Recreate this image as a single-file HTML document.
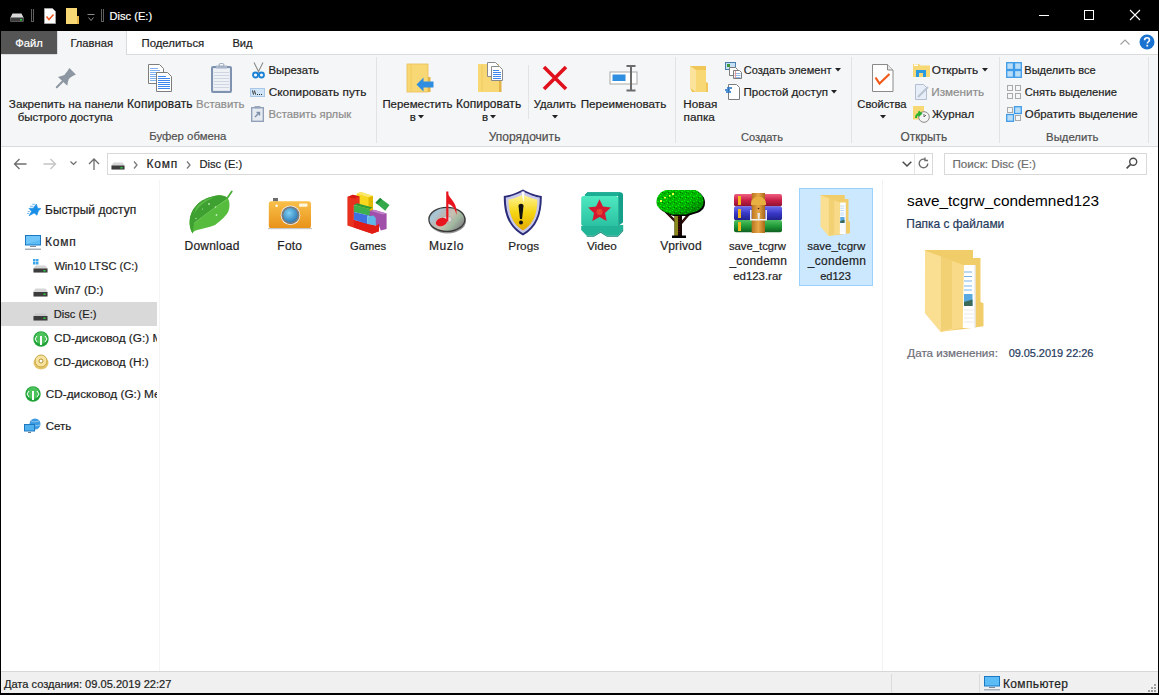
<!DOCTYPE html>
<html><head><meta charset="utf-8">
<style>
html,body{margin:0;padding:0;}
body{width:1159px;height:695px;position:relative;overflow:hidden;background:#fff;font-family:"Liberation Sans",sans-serif;}
.a{position:absolute;}
.t{position:absolute;white-space:pre;font-family:"Liberation Sans",sans-serif;-webkit-text-stroke:0.2px currentColor;}
svg{position:absolute;overflow:visible;}
</style></head><body>
<!-- title bar -->
<div class="a" style="left:0;top:0;width:1159px;height:31px;background:#000"></div>
<!-- borders -->
<div class="a" style="left:0;top:0;width:1px;height:695px;background:#000"></div>
<div class="a" style="left:1158px;top:0;width:1px;height:695px;background:#000"></div>
<div class="a" style="left:0;top:693px;width:1159px;height:2px;background:#000"></div>

<!-- title icons -->
<svg style="left:10px;top:13px" width="14" height="9" viewBox="0 0 14 9">
 <path d="M2.5 0.5h9l2 4v4h-13v-4z" fill="#d9d9d9"/>
 <rect x="0.5" y="4.5" width="13" height="4" fill="#3c3c3c"/>
 <rect x="10" y="6" width="2" height="1.5" fill="#27d13c"/>
</svg>
<svg style="left:44px;top:8px" width="12" height="16" viewBox="0 0 12 16">
 <path d="M0.5 0.5h8l3 3v12h-11z" fill="#fff" stroke="#a0a0a0"/>
 <path d="M2.5 8.5l2.5 3l4.5-5" fill="none" stroke="#f05a22" stroke-width="1.6"/>
</svg>
<svg style="left:66px;top:8px" width="13" height="16" viewBox="0 0 13 16">
 <rect x="0" y="0" width="11" height="16" fill="#f8d775"/>
 <rect x="11" y="8" width="2" height="8" fill="#e8b84a"/>
</svg>
<svg style="left:87px;top:14px" width="8" height="8" viewBox="0 0 8 8">
 <path d="M0.5 0.5h7" stroke="#8a8a8a"/><path d="M1.5 3.5l2.5 3l2.5-3" fill="none" stroke="#8a8a8a"/>
</svg>
<div class="a" style="left:101px;top:9px;height:12px;width:1px;border:1px solid #5e5e5e;border-top:none"></div>
<div class="a" style="left:31px;top:9px;height:12px;width:1px;border:1px solid #5e5e5e;border-top:none"></div>

<!-- window controls -->
<div class="a" style="left:1039px;top:15px;width:10px;height:1px;background:#fff"></div>
<div class="a" style="left:1084px;top:10px;width:8px;height:8px;border:1px solid #fff"></div>
<svg style="left:1130px;top:10px" width="10" height="10" viewBox="0 0 10 10"><path d="M0 0L10 10M10 0L0 10" stroke="#fff" stroke-width="1.1"/></svg>

<!-- tabs row -->
<div class="a" style="left:1px;top:31px;width:56px;height:23px;background:#555555"></div>
<div class="a" style="left:57px;top:31px;width:68px;height:24px;background:#f5f6f7;border-left:1px solid #dadbdc;border-right:1px solid #dadbdc"></div>
<svg style="left:1120px;top:39px" width="10" height="6" viewBox="0 0 10 6"><path d="M0.5 5.5l4.5-4.5l4.5 4.5" fill="none" stroke="#a0a0a0" stroke-width="1.1"/></svg>
<svg style="left:1139px;top:34px" width="16" height="16" viewBox="0 0 16 16">
 <circle cx="8" cy="8" r="7.5" fill="#1a73d0"/>
 <path d="M5.6 6.2c0-1.5 1.1-2.5 2.5-2.5s2.4 0.9 2.4 2.2c0 1.8-2.2 1.9-2.2 3.6" fill="none" stroke="#fff" stroke-width="1.6"/>
 <rect x="7.4" y="10.8" width="1.7" height="1.7" fill="#fff"/>
</svg>

<!-- ribbon body -->
<div class="a" style="left:1px;top:54px;width:1157px;height:92px;background:#f5f6f7"></div>
<div class="a" style="left:1px;top:54px;width:56px;height:1px;background:#dadbdc"></div>
<div class="a" style="left:126px;top:54px;width:1032px;height:1px;background:#dadbdc"></div>
<div class="a" style="left:1px;top:146px;width:1157px;height:1px;background:#dadbdc"></div>
<div class="a" style="left:376px;top:57px;width:1px;height:86px;background:#e2e3e4"></div>
<div class="a" style="left:675px;top:57px;width:1px;height:86px;background:#e2e3e4"></div>
<div class="a" style="left:851px;top:57px;width:1px;height:86px;background:#e2e3e4"></div>
<div class="a" style="left:999px;top:57px;width:1px;height:86px;background:#e2e3e4"></div>
<div class="a" style="left:1148px;top:57px;width:1px;height:86px;background:#e2e3e4"></div>
<div class="a" style="left:528px;top:65px;width:1px;height:54px;background:#e2e3e4"></div>

<!-- address row -->
<div class="a" style="left:107px;top:153px;width:824px;height:20px;border:1px solid #d9d9d9;background:#fff"></div>
<div class="a" style="left:914px;top:154px;width:1px;height:20px;background:#e5e5e5"></div>
<div class="a" style="left:944px;top:153px;width:201px;height:20px;border:1px solid #d9d9d9;background:#fff"></div>

<!-- panes -->
<div class="a" style="left:159px;top:180px;width:1px;height:491px;background:#f4f4f4"></div>
<div class="a" style="left:882px;top:180px;width:1px;height:491px;background:#f2f2f2"></div>
<div class="a" style="left:1px;top:302px;width:156px;height:24px;background:#d9d9d9"></div>

<!-- selected item -->
<div class="a" style="left:799px;top:188px;width:72px;height:96px;background:#cce8ff;border:1px solid #99d1ff"></div>

<!-- status bar -->
<div class="a" style="left:1px;top:671px;width:1157px;height:1px;background:#d7d7d7"></div>
<div class="a" style="left:1px;top:672px;width:1157px;height:21px;background:#f0f0f0"></div>
<div class="a" style="left:891px;top:674px;width:1px;height:19px;background:#dcdcdc"></div>
<div class="a" style="left:979px;top:674px;width:1px;height:19px;background:#dcdcdc"></div>

<!-- ========== RIBBON ICONS ========== -->
<!-- pin -->
<svg style="left:56px;top:68px" width="21" height="21" viewBox="0 0 21 21">
 <path d="M13.4 0 L19.9 6.5 C 16 8, 13.5 10, 12.6 11.5 C 12 13.5, 11.5 15.5, 11.3 17.7 L 2 8.9 C 4.5 8.3, 6.5 7.5, 8.4 6.9 C 10 5, 12 2.5, 13.4 0 Z" fill="#8c97a1"/>
 <path d="M6.5 13.5L0.8 19.2" stroke="#8c97a1" stroke-width="2" stroke-linecap="round"/>
</svg>
<!-- copy -->
<svg style="left:148px;top:64px" width="25" height="28" viewBox="0 0 25 28">
 <path d="M0.5 0.5h11l4 4v15h-15z" fill="#fff" stroke="#7d7d7d"/>
 <g stroke="#7fb0f0" stroke-width="1"><path d="M2 4.5h8M2 6.5h10M2 8.5h10M2 10.5h10M2 12.5h10M2 14.5h10M2 16.5h10"/></g>
 <path d="M8.5 8.5h11l4 4v15h-15z" fill="#fff" stroke="#7d7d7d"/>
 <g stroke="#3d86ee" stroke-width="1"><path d="M10 12.5h8M10 14.5h12M10 16.5h12M10 18.5h12M10 20.5h12M10 22.5h12M10 24.5h12"/></g>
</svg>
<!-- paste clipboard -->
<svg style="left:211px;top:63px" width="21" height="30" viewBox="0 0 21 30">
 <rect x="1" y="4" width="19" height="25" rx="1" fill="#dfe5ee" stroke="#7f93b1" stroke-width="2"/>
 <rect x="2.5" y="6" width="16" height="21" fill="#eef1f6"/>
 <g stroke="#cfd6e2"><path d="M3 9.5h15M3 12.5h15M3 15.5h15M3 18.5h15M3 21.5h15M3 24.5h15"/></g>
 <rect x="5" y="2.5" width="11" height="3" fill="#aab7ca"/>
 <rect x="8" y="0.5" width="5" height="3" rx="1.5" fill="none" stroke="#9aa8bd"/>
</svg>
<!-- scissors -->
<svg style="left:252px;top:62px" width="13" height="17" viewBox="0 0 13 17">
 <path d="M2 0.5l5 10M11 0.5l-5 10" stroke="#8a8a8a" stroke-width="1.1"/>
 <circle cx="3.5" cy="13" r="2.5" fill="none" stroke="#1a82d6" stroke-width="1.8"/>
 <circle cx="9.5" cy="13" r="2.5" fill="none" stroke="#1a82d6" stroke-width="1.8"/>
</svg>
<!-- copy path -->
<svg style="left:250px;top:88px" width="15" height="9" viewBox="0 0 15 9">
 <rect x="0.5" y="0.5" width="14" height="8" fill="#cfe4f7" stroke="#a9c8e8"/>
 <path d="M2.5 2.5l1 4M4.5 2.5l1 4" stroke="#2b2b2b"/>
 <path d="M7 6.5h1M9 6.5h1M11 6.5h1" stroke="#2b2b2b"/>
</svg>
<!-- paste shortcut -->
<svg style="left:251px;top:106px" width="13" height="16" viewBox="0 0 13 16">
 <rect x="0.7" y="1.7" width="11.6" height="13.6" fill="#e6ebf2" stroke="#8b9bb4" stroke-width="1.3"/>
 <rect x="3.5" y="0" width="6" height="2.5" fill="#9aa8bd"/>
 <path d="M4 11l4-4M5.5 6.5h3v3" fill="none" stroke="#7f8fa8" stroke-width="1.4"/>
</svg>
<!-- move to -->
<svg style="left:406px;top:63px" width="28" height="30" viewBox="0 0 28 30">
 <rect x="1" y="1" width="21" height="28" fill="#f8d775"/>
 <rect x="1" y="1" width="21" height="28" fill="none" stroke="#e8bf55" stroke-width="0.8"/>
 <path d="M5 2v26" stroke="#f3ca5f" stroke-width="1"/>
 <rect x="22" y="14" width="2.5" height="15" fill="#e3b447"/>
 <path d="M10.5 21.5l7-7v4h10v6h-10v4z" fill="#2f8ee0"/>
</svg>
<!-- copy to -->
<svg style="left:478px;top:62px" width="27" height="31" viewBox="0 0 27 31">
 <rect x="0" y="2" width="21" height="28" fill="#f8d775"/>
 <path d="M4 3v26" stroke="#f3ca5f"/>
 <rect x="21" y="15" width="2.5" height="15" fill="#e3b447"/>
 <path d="M9.5 0.5h8l3 3v11h-11z" fill="#fff" stroke="#8a8a8a"/>
 <path d="M13.5 4.5h8l3 3v11h-11z" fill="#fff" stroke="#8a8a8a"/>
 <g stroke="#3d86ee"><path d="M15 8.5h6M15 10.5h8M15 12.5h8M15 14.5h8M15 16.5h8"/></g>
</svg>
<!-- delete X -->
<svg style="left:542px;top:65px" width="26" height="26" viewBox="0 0 26 26">
 <path d="M2 2L24 24M24 2L2 24" stroke="#e0101c" stroke-width="3.6"/>
</svg>
<!-- rename -->
<svg style="left:609px;top:65px" width="30" height="27" viewBox="0 0 30 27">
 <rect x="1" y="7" width="27" height="12" fill="#fff" stroke="#a8a8a8"/>
 <rect x="3.5" y="9.5" width="13" height="6.5" fill="#2f8ee0"/>
 <path d="M17.5 1h9M22 1.5v24M17.5 25.5h9" stroke="#6b6b6b" stroke-width="2"/>
</svg>
<!-- new folder -->
<svg style="left:689px;top:65px" width="20" height="28" viewBox="0 0 20 28">
 <path d="M1 1h16v16l2 1v9h-16l-2-4z" fill="#f0c659"/>
 <path d="M1 1l6 4v22l-6-4z" fill="#fbe39b"/>
 <path d="M7 5h10v22h-10z" fill="#f8d775"/>
</svg>
<!-- new item -->
<svg style="left:725px;top:62px" width="17" height="17" viewBox="0 0 17 17">
 <rect x="0.5" y="0.5" width="10" height="7" fill="#c6e0f5" stroke="#4a7fae"/>
 <rect x="2" y="2" width="3" height="3" fill="#3c9a3c"/>
 <path d="M4.5 5.5h6l2 2v6h-8z" fill="#fff" stroke="#7d7d7d"/>
 <path d="M8.5 8.5h6l2 2v6h-8z" fill="#fff" stroke="#7d7d7d"/>
 <g stroke="#8fb7e8"><path d="M9.5 11.5h6M9.5 13.5h6M9.5 15.5h6"/></g>
 <path d="M10.5 9v7" stroke="#e89a9a"/>
</svg>
<!-- easy access -->
<svg style="left:725px;top:84px" width="15" height="16" viewBox="0 0 15 16">
 <path d="M3.5 0.5h8l3 3v12h-11z" fill="#fff" stroke="#7d7d7d"/>
 <path d="M0 6h5M2 4h5M1 8h5" stroke="#1b6fc7" stroke-width="1.3"/>
</svg>
<!-- properties -->
<svg style="left:872px;top:64px" width="22" height="28" viewBox="0 0 22 28">
 <path d="M0.5 0.5h15l5.5 5.5v21.5h-20.5z" fill="#fff" stroke="#8a8a8a"/>
 <path d="M15.5 0.5v5.5h5.5" fill="#e8e8e8" stroke="#8a8a8a"/>
 <path d="M3.5 13.5l4 6l10-9.5" fill="none" stroke="#f05a1a" stroke-width="2.2"/>
</svg>
<!-- open -->
<svg style="left:913px;top:63px" width="17" height="14" viewBox="0 0 17 14">
 <path d="M0 1h6l1.5 1.5h9.5v11.5h-17z" fill="#f8d775"/>
 <rect x="1" y="1.5" width="4" height="1.5" fill="#fff"/>
 <path d="M4.5 14v-5.5h7v5.5" fill="none" stroke="#2b9be0" stroke-width="3"/>
</svg>
<!-- edit -->
<svg style="left:915px;top:84px" width="15" height="16" viewBox="0 0 15 16">
 <path d="M0.5 0.5h8l3 3v12h-11z" fill="#e8eef7" stroke="#b3bfd0"/>
 <path d="M3 13l10-10" stroke="#b8c3d2" stroke-width="2"/>
</svg>
<!-- history -->
<svg style="left:913px;top:106px" width="17" height="17" viewBox="0 0 17 17">
 <rect x="0" y="0" width="11" height="13.5" fill="#f8d775"/>
 <circle cx="11" cy="11" r="5.3" fill="#f4f4f4" stroke="#8a8a8a"/>
 <path d="M11 8v3l2 -2" fill="none" stroke="#666"/>
 <path d="M3 12c0-3 2-4.5 5-4.5M5.5 5.5l2.5 2l-2.5 2.5" fill="none" stroke="#29b22f" stroke-width="2"/>
</svg>
<!-- select all -->
<svg style="left:1006px;top:62px" width="16" height="16" viewBox="0 0 16 16">
 <g fill="#b9dcf7" stroke="#3d9be9" stroke-width="1.3">
 <rect x="0.7" y="0.7" width="6.8" height="6.8"/><rect x="8.5" y="0.7" width="6.8" height="6.8"/>
 <rect x="0.7" y="8.5" width="6.8" height="6.8"/><rect x="8.5" y="8.5" width="6.8" height="6.8"/></g>
</svg>
<!-- select none -->
<svg style="left:1007px;top:85px" width="15" height="15" viewBox="0 0 15 15">
 <g fill="none" stroke="#a9a9a9"><rect x="0.5" y="0.5" width="5" height="5"/><rect x="8.5" y="0.5" width="5" height="5"/>
 <rect x="0.5" y="8.5" width="5" height="5"/><rect x="8.5" y="8.5" width="5" height="5"/></g>
</svg>
<!-- invert -->
<svg style="left:1006px;top:106px" width="16" height="16" viewBox="0 0 16 16">
 <g fill="none" stroke="#a9a9a9"><rect x="1.5" y="1.5" width="5" height="5"/><rect x="9.5" y="9.5" width="5" height="5"/></g>
 <g fill="#b9dcf7" stroke="#3d9be9" stroke-width="1.3"><rect x="8.5" y="0.7" width="6.8" height="6.8"/><rect x="0.7" y="8.5" width="6.8" height="6.8"/></g>
</svg>
<!-- dropdown arrows -->
<svg style="left:418px;top:115px" width="6" height="4" viewBox="0 0 6 4"><path d="M0 0h6l-3 3.5z" fill="#222"/></svg>
<svg style="left:490px;top:115px" width="6" height="4" viewBox="0 0 6 4"><path d="M0 0h6l-3 3.5z" fill="#222"/></svg>
<svg style="left:552px;top:115px" width="6" height="4" viewBox="0 0 6 4"><path d="M0 0h6l-3 3.5z" fill="#222"/></svg>
<svg style="left:880px;top:115px" width="6" height="4" viewBox="0 0 6 4"><path d="M0 0h6l-3 3.5z" fill="#222"/></svg>
<svg style="left:835px;top:68px" width="6" height="4" viewBox="0 0 6 4"><path d="M0 0h6l-3 3.5z" fill="#222"/></svg>
<svg style="left:831px;top:90px" width="6" height="4" viewBox="0 0 6 4"><path d="M0 0h6l-3 3.5z" fill="#222"/></svg>
<svg style="left:982px;top:68px" width="6" height="4" viewBox="0 0 6 4"><path d="M0 0h6l-3 3.5z" fill="#222"/></svg>

<!-- ========== ADDRESS ROW ICONS ========== -->
<svg style="left:13px;top:158px" width="14" height="12" viewBox="0 0 14 12"><path d="M13.5 6h-12M6.5 1l-5 5l5 5" fill="none" stroke="#6d6d6d" stroke-width="1.3"/></svg>
<svg style="left:43px;top:158px" width="14" height="12" viewBox="0 0 14 12"><path d="M0.5 6h12M7.5 1l5 5l-5 5" fill="none" stroke="#c4c4c4" stroke-width="1.3"/></svg>
<svg style="left:70px;top:161px" width="7" height="5" viewBox="0 0 7 5"><path d="M0.5 0.5l3 3l3-3" fill="none" stroke="#6d6d6d" stroke-width="1.2"/></svg>
<svg style="left:88px;top:158px" width="12" height="12" viewBox="0 0 12 12"><path d="M6 12v-11M1 6l5-5l5 5" fill="none" stroke="#6d6d6d" stroke-width="1.3"/></svg>
<svg style="left:111px;top:162px" width="14" height="8" viewBox="0 0 14 8">
 <path d="M2.5 0.5h9l2 3v4h-13v-4z" fill="#d6d6d6"/>
 <rect x="0.5" y="3.5" width="13" height="4" fill="#3c3c3c"/>
 <rect x="9.5" y="5" width="2" height="1.5" fill="#27d13c"/>
</svg>
<svg style="left:133px;top:161px" width="5" height="8" viewBox="0 0 5 8"><path d="M1 0.5l3 3.5l-3 3.5" fill="none" stroke="#7a7a7a" stroke-width="1.3"/></svg>
<svg style="left:186px;top:161px" width="5" height="8" viewBox="0 0 5 8"><path d="M1 0.5l3 3.5l-3 3.5" fill="none" stroke="#7a7a7a" stroke-width="1.3"/></svg>
<svg style="left:902px;top:161px" width="10" height="6" viewBox="0 0 10 6"><path d="M0.7 0.7l4.3 4.3l4.3-4.3" fill="none" stroke="#4a4a4a" stroke-width="1.5"/></svg>
<svg style="left:918px;top:157px" width="12" height="13" viewBox="0 0 12 13"><path d="M9.8 6.5a4.3 4.3 0 1 1 -2.2-3.8M7 0.5v3h3" fill="none" stroke="#6d6d6d" stroke-width="1.4"/></svg>
<svg style="left:1126px;top:157px" width="12" height="12" viewBox="0 0 12 12"><circle cx="7.2" cy="4.8" r="3.5" fill="none" stroke="#4a4a4a" stroke-width="1.4"/><path d="M4.6 7.4l-4 4" stroke="#4a4a4a" stroke-width="1.6"/></svg>

<!-- ========== NAV ICONS ========== -->
<svg style="left:25px;top:203px" width="17" height="14" viewBox="0 0 17 14">
 <path d="M11.4 1.0 L12.6 5.2 L16.0 5.5 L13.3 8.0 L12.0 12.3 L9.2 10.0 L4.0 12.8 L6.6 8.3 L3.9 5.4 L8.3 5.2 Z" fill="#1a8ee6" stroke="#1a8ee6" stroke-width="0.6" stroke-linejoin="round"/>
 <path d="M7.2 1.3h3M5 3.3h3.5M2.8 8.5h2M2 10.4h2.2" stroke="#6ab4ee" stroke-width="0.9"/>
</svg>
<svg style="left:25px;top:235px" width="16" height="15" viewBox="0 0 16 15">
 <rect x="0.5" y="0.5" width="15" height="9.5" fill="#5bbcf6" stroke="#1b79c4"/>
 <path d="M1 1h14v4l-14 4z" fill="#7fcdfa" opacity="0.6"/>
 <rect x="5" y="11" width="6" height="1" fill="#7d8c9c"/>
 <rect x="0" y="13.5" width="16" height="1.5" fill="#a7b1bb"/>
</svg>
<svg style="left:33px;top:259px" width="15" height="14" viewBox="0 0 15 14">
 <g fill="#3aa6e8"><rect x="0" y="0" width="2.5" height="2.5"/><rect x="3" y="0" width="2.5" height="2.5"/><rect x="0" y="3" width="2.5" height="2.5"/><rect x="3" y="3" width="2.5" height="2.5"/></g>
 <path d="M2.5 6.5h10l2 3v4h-14v-4z" fill="#d6d6d6"/>
 <rect x="0.5" y="9.5" width="14" height="4" fill="#3c3c3c"/>
 <rect x="10.5" y="11" width="2" height="1.5" fill="#27d13c"/>
</svg>
<svg style="left:33px;top:288px" width="15" height="9" viewBox="0 0 15 9">
 <path d="M2.5 0.5h10l2 3v5h-14v-5z" fill="#d6d6d6"/>
 <rect x="0.5" y="4" width="14" height="4.5" fill="#3c3c3c"/>
 <rect x="10.5" y="5.5" width="2" height="1.5" fill="#27d13c"/>
</svg>
<svg style="left:33px;top:312px" width="15" height="9" viewBox="0 0 15 9">
 <path d="M2.5 1.5h10l2 3v4h-14v-4z" fill="#c9c9c9"/>
 <rect x="0.5" y="4" width="14" height="4.5" fill="#3c3c3c"/>
 <rect x="10.5" y="5.5" width="2" height="1.5" fill="#27d13c"/>
</svg>
<svg style="left:33px;top:331px" width="16" height="16" viewBox="0 0 16 16">
 <circle cx="8" cy="8" r="7.7" fill="#22a33a"/><circle cx="8" cy="7" r="6" fill="#4cc25a"/>
 <rect x="7" y="5" width="2" height="9" fill="#fff"/>
 <path d="M4 5l-2 3l2 3M12 5l2 3l-2 3" fill="none" stroke="#fff" stroke-width="1"/>
</svg>
<svg style="left:33px;top:354px" width="16" height="16" viewBox="0 0 16 16">
 <ellipse cx="8" cy="9" rx="7.5" ry="6.5" fill="#e3c56a"/>
 <circle cx="8" cy="7" r="6" fill="#f6e3a0" stroke="#c8a540"/>
 <circle cx="8" cy="7" r="2" fill="#fff" stroke="#b59030"/>
</svg>
<svg style="left:25px;top:386px" width="16" height="16" viewBox="0 0 16 16">
 <circle cx="8" cy="8" r="7.7" fill="#22a33a"/><circle cx="8" cy="7" r="6" fill="#4cc25a"/>
 <rect x="7" y="5" width="2" height="9" fill="#fff"/>
 <path d="M4 5l-2 3l2 3M12 5l2 3l-2 3" fill="none" stroke="#fff" stroke-width="1"/>
</svg>
<svg style="left:24px;top:418px" width="17" height="16" viewBox="0 0 17 16">
 <circle cx="11" cy="6" r="5.5" fill="#3e9be0"/>
 <path d="M7 3c2 1 5 1 8 0M6.5 7c3 1 6 1 9.5 0" stroke="#9fd0f5" stroke-width="0.8" fill="none"/>
 <rect x="0.5" y="6.5" width="10" height="6.5" fill="#4fb2ef" stroke="#1d78c0"/>
 <rect x="4" y="14" width="3" height="1" fill="#6d7f90"/>
</svg>

<!-- ========== STATUS ========== -->
<svg style="left:984px;top:676px" width="16" height="15" viewBox="0 0 16 15">
 <rect x="0.5" y="0.5" width="15" height="9.5" fill="#5bbcf6" stroke="#1b79c4"/>
 <rect x="5" y="11" width="6" height="1" fill="#7d8c9c"/>
 <rect x="0" y="13" width="16" height="1.5" fill="#a7b1bb"/>
</svg>
<svg style="left:1148px;top:684px" width="8" height="8" viewBox="0 0 8 8">
 <g fill="#a0a0a0"><rect x="6" y="0" width="2" height="2"/><rect x="3" y="3" width="2" height="2"/><rect x="6" y="3" width="2" height="2"/><rect x="0" y="6" width="2" height="2"/><rect x="3" y="6" width="2" height="2"/><rect x="6" y="6" width="2" height="2"/></g>
</svg>

<!-- ========== CONTENT ICONS (page coords) ========== -->
<svg style="left:0;top:0" width="1159" height="695" viewBox="0 0 1159 695">
 <defs>
  <linearGradient id="leafg" x1="0" y1="0" x2="0.6" y2="1"><stop offset="0" stop-color="#9be06a"/><stop offset="0.5" stop-color="#5cbf3a"/><stop offset="1" stop-color="#2e8f1e"/></linearGradient>
  <linearGradient id="camg" x1="0" y1="0" x2="0" y2="1"><stop offset="0" stop-color="#f9c04a"/><stop offset="1" stop-color="#e8921a"/></linearGradient>
  <radialGradient id="lensg" cx="0.4" cy="0.35" r="0.7"><stop offset="0" stop-color="#7fd0f5"/><stop offset="1" stop-color="#2a78b5"/></radialGradient>
  <linearGradient id="cdg" x1="0" y1="0" x2="1" y2="0.6"><stop offset="0" stop-color="#9a9aa0"/><stop offset="0.25" stop-color="#a8c8d8"/><stop offset="0.4" stop-color="#b8b8b8"/><stop offset="0.6" stop-color="#c8c0b0"/><stop offset="0.8" stop-color="#a0b8a0"/><stop offset="1" stop-color="#888"/></linearGradient>
  <linearGradient id="shg" x1="0" y1="0" x2="0" y2="1"><stop offset="0" stop-color="#fff59a"/><stop offset="0.5" stop-color="#f6d514"/><stop offset="1" stop-color="#e2a900"/></linearGradient>
  <linearGradient id="vidg" x1="0" y1="0" x2="0" y2="1"><stop offset="0" stop-color="#4ee8c0"/><stop offset="1" stop-color="#2ac2a2"/></linearGradient>
  <linearGradient id="rarR" x1="0" y1="0" x2="0" y2="1"><stop offset="0" stop-color="#f06080"/><stop offset="0.5" stop-color="#c82048"/><stop offset="1" stop-color="#8a1030"/></linearGradient>
  <linearGradient id="rarB" x1="0" y1="0" x2="0" y2="1"><stop offset="0" stop-color="#7070f0"/><stop offset="0.5" stop-color="#3838c8"/><stop offset="1" stop-color="#20208a"/></linearGradient>
  <linearGradient id="rarG" x1="0" y1="0" x2="0" y2="1"><stop offset="0" stop-color="#50c060"/><stop offset="0.5" stop-color="#1f9a38"/><stop offset="1" stop-color="#0e5e20"/></linearGradient>
  <linearGradient id="beltg" x1="0" y1="0" x2="1" y2="0"><stop offset="0" stop-color="#b87420"/><stop offset="0.5" stop-color="#e8a848"/><stop offset="1" stop-color="#a86818"/></linearGradient>
  <pattern id="treep" width="6" height="5" patternUnits="userSpaceOnUse">
   <rect width="6" height="5" fill="#00b400"/><rect x="0" y="0" width="1" height="1" fill="#00ff00"/><rect x="3" y="1" width="2" height="1" fill="#00f000"/><rect x="1" y="3" width="1" height="1" fill="#00ff00"/><rect x="4" y="3" width="1" height="1" fill="#008800"/><rect x="2" y="2" width="1" height="1" fill="#007000"/>
  </pattern>
  <linearGradient id="treeshade" x1="0" y1="0" x2="1" y2="1"><stop offset="0" stop-color="#000" stop-opacity="0"/><stop offset="0.55" stop-color="#000" stop-opacity="0"/><stop offset="1" stop-color="#002000" stop-opacity="0.45"/></linearGradient>
  <symbol id="fold" viewBox="0 0 61 82">
   <path d="M1 0h48v8h7.5v44l3 1.3v23l-21 3l-21.6 2.2z" fill="#f1cd6a"/>
   <path d="M38.5 15h13v63h-13z" fill="#ffffff"/>
   <path d="M50.5 15h1v63h-1z" fill="#e0e0e0"/>
   <g stroke="#6aaae6" stroke-width="0.9"><path d="M40 22h8M40 26.5h8M40 31h8M40 36h8M40 40h8"/></g>
   <g stroke="#dcdcdc" stroke-width="0.6"><path d="M40 60h10M40 64h10M40 68h10M40 72h10"/></g>
   <path d="M40 44h8.5v12h-8.5z" fill="#5aa8e0"/><path d="M40 52l8.5-2.5v6.5h-8.5z" fill="#3a6a5a"/>
   <path d="M1 0.8l39 14.4l-1.5 62.6l-21.6 4.3l-16-19z" fill="#f8da88"/>
   <path d="M17 6.5l11 4v68l-11 2.5z" fill="#f2d074"/>
   <path d="M1 0.8l16 5.7v75.5l-16-19z" fill="#fade92"/>
  </symbol>
 </defs>

 <!-- leaf -->
 <path d="M192.5 233.4 C 188 226, 188.5 214, 195.7 206.2 C 200 201, 207 197, 218.2 195.3 C 222 195, 225 196, 227.5 198 C 230 201, 230 207, 228.3 211.6 C 226 216, 222 220, 215.1 224.9 C 210 227, 203 228, 196.4 230.3 C 194.5 231, 193 232, 192.5 233.4 Z" fill="#56bc3e"/>
 <path d="M192.5 233.4 C 188 226, 188.5 214, 195.7 206.2 C 200 201, 207 197, 218.2 195.3 C 222 195, 225 196, 227.5 198 C 220 204, 210 212, 194.1 223.3 Z" fill="#3ea030"/>
 <path d="M196 208 C 200 202, 207 198, 215 197 C 205 201, 199 206, 194 214 Z" fill="#6cc858" opacity="0.6"/>
 <path d="M194.1 223.3 C 205 215, 215 207, 227 199.5" stroke="#7ad060" stroke-width="0.8" fill="none"/>
 <path d="M227 198.5 L231.8 191.4" stroke="#4cb03a" stroke-width="1.8" stroke-linecap="round"/>
 <g fill="#e8ffe0" opacity="0.75"><circle cx="209" cy="204" r="0.9"/><circle cx="215.5" cy="207" r="0.8"/><circle cx="196" cy="218.5" r="0.7"/><circle cx="216.5" cy="215" r="0.9"/><circle cx="202.5" cy="209" r="0.6"/></g>

 <!-- camera -->
 <rect x="273" y="198" width="5" height="3.5" fill="#6d6d6d"/>
 <rect x="268.8" y="201.3" width="42.2" height="27" rx="2.5" fill="url(#camg)"/>
 <rect x="268" y="228" width="44" height="1.2" fill="#c8c8c8"/>
 <circle cx="290.5" cy="215.2" r="9.8" fill="#f3f3f3"/>
 <circle cx="290.5" cy="215.2" r="9" fill="#7c7c7c"/>
 <circle cx="290.5" cy="215.2" r="7.2" fill="url(#lensg)"/>
 <rect x="299" y="203.5" width="8.5" height="3.2" rx="1" fill="#fff6e0"/>
 <circle cx="276.6" cy="205.8" r="1.2" fill="#fff"/>

 <!-- games blocks -->
 <path d="M356.7 193.4 L361 192 L373 195.9 L373 213 L356.7 208 Z" fill="#f7d81e"/>
 <path d="M356.7 193.4 L361 192 L373 195.9 L368.5 197.3 Z" fill="#fbe870"/>
 <path d="M368.5 197.3 L373 195.9 L373 213 L368.5 213 Z" fill="#e0b800"/>
 <path d="M369 211 L374 209.8 L386.6 213.5 L386.6 229 L380.8 230.6 L379 226 L369 224 Z" fill="#a050a8"/>
 <path d="M370.8 211 L374 209.8 L386.6 213.5 L383 214.5 Z" fill="#c080c8"/>
 <path d="M347.4 197 L352.8 194.8 L359.6 196.6 L359.6 205 L353.9 205 L353.9 220 L375.8 225.8 L379 224 L379 231.2 L372.2 233.7 L347.4 225.4 Z" fill="#e8301e"/>
 <path d="M347.4 197 L352.8 194.8 L359.6 196.6 L354.5 198.6 Z" fill="#d81a14"/>
 <path d="M353.9 220 L375.8 225.8 L379 224 L379 231.2 L372.2 233.7 L353.9 227.5 Z" fill="#e01c14"/>
 <path d="M353.9 204.9 L357 203.3 L372.5 207.5 L369.7 208.9 Z" fill="#2a9a3a"/>
 <path d="M353.9 204.9 L369.7 208.9 L369.7 215.7 L353.9 212.1 Z" fill="#3cb04c"/>
 <path d="M353.9 212.1 L369.7 215.7 L367.2 216.4 L367.2 224 L353.9 219.7 Z" fill="#4070e0"/>
 <path d="M367.2 216.4 L373.7 215.5 L375.8 218.2 L375.8 225.4 L367.2 224 Z" fill="#60b8e8"/>
 <path d="M375.5 202.7 L380.1 198 L389.5 204.9 L385.2 210.7 Z" fill="#34a84a"/>
 <path d="M375.5 202.7 L380.1 198 L382 199.4 L377.2 204 Z" fill="#1e8a34"/>

 <!-- muzlo -->
 <ellipse cx="447.5" cy="221" rx="18.5" ry="12.5" fill="#3c3c3c" opacity="0.55"/>
 <ellipse cx="446.9" cy="219.4" rx="18" ry="12" fill="url(#cdg)" stroke="#3a3a3a" stroke-width="1.3"/>
 <ellipse cx="446.9" cy="219.4" rx="5" ry="3.4" fill="#d8d8d8" stroke="#9a9a9a" stroke-width="0.6"/>
 <ellipse cx="446.9" cy="219.4" rx="2" ry="1.4" fill="#fff"/>
 <ellipse cx="441.5" cy="222" rx="5.8" ry="4" transform="rotate(-20 441.5 222)" fill="#e8141e"/>
 <rect x="446.2" y="191.5" width="2.2" height="30" fill="#e8141e"/>
 <path d="M447 191.5 C 449 199, 458 202, 456.5 215 C 455 208, 452 205, 447.5 203.5 Z" fill="#e8141e"/>

 <!-- shield -->
 <path d="M523 189.5 C 515 193.5, 509 195.5, 503.8 196 C 503.5 214, 509 228, 523 235.5 C 537 228, 542 214, 541.8 196 C 536.5 195.5, 531 193.5, 523 189.5 Z" fill="#2a2c78"/>
 <path d="M523 191.5 C 515.5 195, 510 197, 505.8 197.6 C 505.8 214, 511 226.5, 523 233.3 C 535 226.5, 540 214, 539.8 197.6 C 535.5 197, 530.5 195, 523 191.5 Z" fill="#c8c8ec"/>
 <path d="M523 194.5 C 516.5 197.5, 512 199, 508.5 199.5 C 508.5 214, 513 224.5, 523 230.5 C 533 224.5, 537.5 214, 537.3 199.5 C 534 199, 529.5 197.5, 523 194.5 Z" fill="url(#shg)"/>
 <path d="M521.5 191.5 L524.5 191.5 L523.5 203 Z" fill="#ffffff"/>
 <path d="M518.5 206 C 518.5 203, 523.5 203, 523.5 206 L 522 219 L 520 219 Z" fill="#111"/>
 <circle cx="521" cy="222.5" r="2" fill="#111"/>

 <!-- video -->
 <path d="M581.2 226 L623.2 225 L623.2 229 L618 235.7 L607 235.7 L600.6 231.5 L594 235.7 L586.7 235.7 L581.2 230 Z" fill="#22b496"/>
 <path d="M586.7 235.7 L594 235.7 L600.6 231.5 L607 235.7 L618 235.7 L623.2 229 L623.2 231 L618 236.8 L607 236.8 L600.6 232.8 L594 236.8 L586.7 236.8 Z" fill="#138a78"/>
 <path d="M584.5 195 L587.5 192.2 L620 192.2 C 622 192.2, 623 193.5, 623 195 L623 222.5 L618.1 226 L618.1 196.1 Z" fill="#14a08a"/>
 <path d="M587.5 192.2 L620 192.2 L618.1 196.1 L584.5 196.1 Z" fill="#1cae94"/>
 <rect x="581.2" y="196.1" width="37" height="29.8" rx="2.5" fill="url(#vidg)"/>
 <path d="M599.5 199.3 L602.9 206.6 L610.9 207.6 L605.0 213.1 L606.6 221.0 L599.5 217.1 L592.4 221.0 L594.0 213.1 L588.1 207.6 L596.1 206.6 Z" fill="#d41830"/>
 <circle cx="599.5" cy="212" r="3" fill="#f06030" opacity="0.6"/>

 <!-- tree -->
 <path d="M666 212 L675.5 221.5 M689 214 L680.5 224" stroke="#1a0505" stroke-width="2.4"/>
 <path d="M666 212 L675.5 221.5 M689 214 L680.5 224" stroke="#8a1a10" stroke-width="0.9" stroke-dasharray="1 1"/>
 <rect x="674.5" y="214" width="7.5" height="22" fill="#1a0505"/>
 <rect x="674.5" y="214" width="3.5" height="22" fill="#8a8a1c"/>
 <path d="M679 216v18" stroke="#8a1a10" stroke-width="0.9" stroke-dasharray="1 1.5"/>
 <rect x="672" y="235.5" width="14" height="2.5" fill="#000"/>
 <path d="M667.5 191.5 L697 191.5 C 701.5 193.5, 705 197.5, 705 202.5 C 705 207.5, 702.5 210.5, 698.5 212.5 L 687.5 216 L 673.5 216 C 667.5 214.5, 662.5 211.5, 659.5 208.5 Z" fill="#000"/>
 <path d="M666 190 L695.5 190 C 700 192, 703.5 196, 703.5 201 C 703.5 206, 701 209, 697 211 L 686 214.5 L 672 214.5 C 666 213, 661 210, 658 207 C 656 204.5, 656 199, 658 196 C 660 193, 662 191, 666 190 Z" fill="url(#treep)"/>
 <path d="M666 190 L695.5 190 C 700 192, 703.5 196, 703.5 201 C 703.5 206, 701 209, 697 211 L 686 214.5 L 672 214.5 C 666 213, 661 210, 658 207 C 656 204.5, 656 199, 658 196 C 660 193, 662 191, 666 190 Z" fill="url(#treeshade)"/>
 <g fill="#f0ff40"><rect x="660" y="200" width="2" height="2"/><rect x="664" y="197" width="2" height="1.5"/><rect x="672" y="193" width="2" height="2"/><rect x="669" y="195" width="1.5" height="1.5"/></g>

 <!-- winrar -->
 <rect x="734" y="194" width="48" height="12.6" rx="2" fill="url(#rarR)"/>
 <rect x="734" y="206.3" width="48" height="14" rx="2" fill="url(#rarB)"/>
 <rect x="734" y="220" width="48" height="12.3" rx="2" fill="url(#rarG)"/>
 <g fill="#f5b818"><rect x="738" y="196" width="3" height="9"/><rect x="738" y="209" width="3" height="9"/><rect x="738" y="222" width="3" height="9"/></g>
 <rect x="751.7" y="193" width="13.3" height="40" fill="url(#beltg)"/>
 <path d="M751 203.5 C 751 194.5, 766 194.5, 766 203.5 L 766 205 L 751 205 Z" fill="#e8b040"/>
 <path d="M750.8 210 L750.8 219.8 L766.2 219.8 L766.2 210" fill="none" stroke="#f4f4f4" stroke-width="1.5"/>
 <path d="M757.5 213 L760 213 L759.5 220 L758 220 Z" fill="#e8e8e8"/>
 <circle cx="758.5" cy="208.5" r="0.8" fill="#402000"/>

 <!-- folders -->
 <use href="#fold" x="820" y="195" width="31" height="41"/>
 <use href="#fold" x="924" y="250" width="61" height="82"/>
</svg>


<div class="t" style="left:109.61px;top:11.00px;font-size:11.08px;line-height:11.08px;letter-spacing:0.000px;color:#ffffff;">Disc (E:)</div>
<div class="t" style="left:15.14px;top:38.00px;font-size:11.22px;line-height:11.22px;letter-spacing:0.000px;color:#ffffff;">Файл</div>
<div class="t" style="left:70.40px;top:38.00px;font-size:11.19px;line-height:11.19px;letter-spacing:0.000px;color:#1e1e1e;">Главная</div>
<div class="t" style="left:141.49px;top:38.00px;font-size:11.36px;line-height:11.36px;letter-spacing:0.000px;color:#1e1e1e;">Поделиться</div>
<div class="t" style="left:232.41px;top:38.00px;font-size:11.13px;line-height:11.13px;letter-spacing:0.000px;color:#1e1e1e;">Вид</div>
<div class="t" style="left:8.85px;top:98.00px;font-size:11.74px;line-height:11.74px;letter-spacing:0.000px;color:#1e1e1e;">Закрепить на панели</div>
<div class="t" style="left:17.72px;top:112.00px;font-size:11.53px;line-height:11.53px;letter-spacing:0.000px;color:#1e1e1e;">быстрого доступа</div>
<div class="t" style="left:127.04px;top:98.00px;font-size:12.00px;line-height:12.00px;letter-spacing:0.093px;color:#1e1e1e;">Копировать</div>
<div class="t" style="left:196.09px;top:99.00px;font-size:11.41px;line-height:11.41px;letter-spacing:0.000px;color:#8d8d8d;">Вставить</div>
<div class="t" style="left:268.49px;top:65.00px;font-size:11.37px;line-height:11.37px;letter-spacing:0.000px;color:#1e1e1e;">Вырезать</div>
<div class="t" style="left:268.81px;top:87.00px;font-size:11.81px;line-height:11.81px;letter-spacing:0.000px;color:#1e1e1e;">Скопировать путь</div>
<div class="t" style="left:268.50px;top:109.00px;font-size:11.31px;line-height:11.31px;letter-spacing:0.000px;color:#8d8d8d;">Вставить ярлык</div>
<div class="t" style="left:149.19px;top:131.00px;font-size:11.37px;line-height:11.37px;letter-spacing:0.000px;color:#505050;">Буфер обмена</div>
<div class="t" style="left:382.38px;top:99.00px;font-size:11.44px;line-height:11.44px;letter-spacing:0.000px;color:#1e1e1e;">Переместить</div>
<div class="t" style="left:409.81px;top:112.00px;font-size:11.50px;line-height:11.50px;letter-spacing:0.000px;color:#1e1e1e;">в</div>
<div class="t" style="left:456.04px;top:98.00px;font-size:12.00px;line-height:12.00px;letter-spacing:0.060px;color:#1e1e1e;">Копировать</div>
<div class="t" style="left:482.01px;top:112.00px;font-size:11.50px;line-height:11.50px;letter-spacing:0.000px;color:#1e1e1e;">в</div>
<div class="t" style="left:533.78px;top:99.00px;font-size:11.10px;line-height:11.10px;letter-spacing:0.000px;color:#1e1e1e;">Удалить</div>
<div class="t" style="left:580.67px;top:98.00px;font-size:11.68px;line-height:11.68px;letter-spacing:0.000px;color:#1e1e1e;">Переименовать</div>
<div class="t" style="left:488.66px;top:131.00px;font-size:12.00px;line-height:12.00px;letter-spacing:0.032px;color:#505050;">Упорядочить</div>
<div class="t" style="left:683.36px;top:98.00px;font-size:11.69px;line-height:11.69px;letter-spacing:0.000px;color:#1e1e1e;">Новая</div>
<div class="t" style="left:683.59px;top:112.00px;font-size:11.81px;line-height:11.81px;letter-spacing:0.000px;color:#1e1e1e;">папка</div>
<div class="t" style="left:743.85px;top:65.00px;font-size:11.02px;line-height:11.02px;letter-spacing:0.000px;color:#1e1e1e;">Создать элемент</div>
<div class="t" style="left:743.48px;top:87.00px;font-size:11.56px;line-height:11.56px;letter-spacing:0.000px;color:#1e1e1e;">Простой доступ</div>
<div class="t" style="left:740.95px;top:132.00px;font-size:11.05px;line-height:11.05px;letter-spacing:0.000px;color:#505050;">Создать</div>
<div class="t" style="left:857.34px;top:99.00px;font-size:11.21px;line-height:11.21px;letter-spacing:0.000px;color:#1e1e1e;">Свойства</div>
<div class="t" style="left:931.73px;top:65.00px;font-size:11.80px;line-height:11.80px;letter-spacing:0.000px;color:#1e1e1e;">Открыть</div>
<div class="t" style="left:931.26px;top:86.00px;font-size:11.73px;line-height:11.73px;letter-spacing:0.000px;color:#8d8d8d;">Изменить</div>
<div class="t" style="left:932.08px;top:109.00px;font-size:11.55px;line-height:11.55px;letter-spacing:0.000px;color:#1e1e1e;">Журнал</div>
<div class="t" style="left:900.52px;top:132.00px;font-size:11.91px;line-height:11.91px;letter-spacing:0.000px;color:#505050;">Открыть</div>
<div class="t" style="left:1024.32px;top:65.00px;font-size:11.05px;line-height:11.05px;letter-spacing:0.000px;color:#1e1e1e;">Выделить все</div>
<div class="t" style="left:1024.64px;top:87.00px;font-size:11.22px;line-height:11.22px;letter-spacing:0.000px;color:#1e1e1e;">Снять выделение</div>
<div class="t" style="left:1024.74px;top:109.00px;font-size:11.44px;line-height:11.44px;letter-spacing:0.000px;color:#1e1e1e;">Обратить выделение</div>
<div class="t" style="left:1046.09px;top:132.00px;font-size:11.33px;line-height:11.33px;letter-spacing:0.000px;color:#505050;">Выделить</div>
<div class="t" style="left:146.44px;top:158.00px;font-size:12.00px;line-height:12.00px;letter-spacing:0.795px;color:#1e1e1e;">Комп</div>
<div class="t" style="left:199.41px;top:159.00px;font-size:11.16px;line-height:11.16px;letter-spacing:0.000px;color:#1e1e1e;">Disc (E:)</div>
<div class="t" style="left:952.47px;top:158.00px;font-size:11.67px;line-height:11.67px;letter-spacing:0.000px;color:#6d6d6d;">Поиск: Disc (E:)</div>
<div class="t" style="left:45.04px;top:204.00px;font-size:12.00px;line-height:12.00px;letter-spacing:0.005px;color:#1e1e1e;">Быстрый доступ</div>
<div class="t" style="left:45.04px;top:236.00px;font-size:12.00px;line-height:12.00px;letter-spacing:0.795px;color:#1e1e1e;">Комп</div>
<div class="t" style="left:54.40px;top:261.00px;font-size:11.10px;line-height:11.10px;letter-spacing:0.000px;color:#1e1e1e;">Win10 LTSC (C:)</div>
<div class="t" style="left:54.40px;top:285.00px;font-size:11.59px;line-height:11.59px;letter-spacing:0.000px;color:#1e1e1e;">Win7 (D:)</div>
<div class="t" style="left:53.71px;top:309.00px;font-size:11.16px;line-height:11.16px;letter-spacing:0.000px;color:#1e1e1e;">Disc (E:)</div>
<div class="t" style="left:54.01px;top:333.00px;font-size:11.80px;line-height:11.80px;letter-spacing:0.000px;color:#1e1e1e;width:103.0px;overflow:hidden;">CD-дисковод (G:) Me</div>
<div class="t" style="left:54.01px;top:357.00px;font-size:11.83px;line-height:11.83px;letter-spacing:0.000px;color:#1e1e1e;">CD-дисковод (H:)</div>
<div class="t" style="left:45.71px;top:389.00px;font-size:11.80px;line-height:11.80px;letter-spacing:0.000px;color:#1e1e1e;width:111.3px;overflow:hidden;">CD-дисковод (G:) Me</div>
<div class="t" style="left:45.72px;top:421.00px;font-size:11.53px;line-height:11.53px;letter-spacing:0.000px;color:#1e1e1e;">Сеть</div>
<div class="t" style="left:184.54px;top:240.00px;font-size:12.00px;line-height:12.00px;letter-spacing:0.210px;color:#1e1e1e;">Download</div>
<div class="t" style="left:277.34px;top:240.00px;font-size:12.00px;line-height:12.00px;letter-spacing:0.227px;color:#1e1e1e;">Foto</div>
<div class="t" style="left:349.94px;top:241.00px;font-size:11.23px;line-height:11.23px;letter-spacing:0.000px;color:#1e1e1e;">Games</div>
<div class="t" style="left:429.04px;top:240.00px;font-size:12.00px;line-height:12.00px;letter-spacing:0.571px;color:#1e1e1e;">Muzlo</div>
<div class="t" style="left:508.36px;top:240.00px;font-size:11.75px;line-height:11.75px;letter-spacing:0.000px;color:#1e1e1e;">Progs</div>
<div class="t" style="left:587.00px;top:240.00px;font-size:11.70px;line-height:11.70px;letter-spacing:0.000px;color:#1e1e1e;">Video</div>
<div class="t" style="left:660.20px;top:240.00px;font-size:12.00px;line-height:12.00px;letter-spacing:0.114px;color:#1e1e1e;">Vprivod</div>
<div class="t" style="left:728.97px;top:241.00px;font-size:11.28px;line-height:11.28px;letter-spacing:0.000px;color:#1e1e1e;">save_tcgrw</div>
<div class="t" style="left:729.44px;top:255.00px;font-size:12.00px;line-height:12.00px;letter-spacing:0.199px;color:#1e1e1e;">_condemn</div>
<div class="t" style="left:733.24px;top:271.00px;font-size:11.42px;line-height:11.42px;letter-spacing:0.000px;color:#1e1e1e;">ed123.rar</div>
<div class="t" style="left:807.17px;top:241.00px;font-size:11.48px;line-height:11.48px;letter-spacing:0.000px;color:#1e1e1e;">save_tcgrw</div>
<div class="t" style="left:807.64px;top:255.00px;font-size:12.00px;line-height:12.00px;letter-spacing:0.328px;color:#1e1e1e;">_condemn</div>
<div class="t" style="left:820.16px;top:271.00px;font-size:11.02px;line-height:11.02px;letter-spacing:0.000px;color:#1e1e1e;">ed123</div>
<div class="t" style="left:906.99px;top:193.00px;font-size:15.36px;line-height:15.36px;letter-spacing:0.000px;color:#000000;-webkit-text-stroke:0;">save_tcgrw_condemned123</div>
<div class="t" style="left:906.35px;top:219.00px;font-size:11.93px;line-height:11.93px;letter-spacing:0.000px;color:#1e395b;">Папка с файлами</div>
<div class="t" style="left:907.30px;top:347.00px;font-size:11.64px;line-height:11.64px;letter-spacing:0.000px;color:#6d6d78;">Дата изменения:</div>
<div class="t" style="left:1008.67px;top:348.00px;font-size:11.00px;line-height:11.00px;letter-spacing:-0.061px;color:#1e395b;">09.05.2019 22:26</div>
<div class="t" style="left:3.90px;top:679.00px;font-size:11.08px;line-height:11.08px;letter-spacing:0.000px;color:#1e1e1e;">Дата создания: 09.05.2019 22:27</div>
<div class="t" style="left:1003.04px;top:678.00px;font-size:12.00px;line-height:12.00px;letter-spacing:0.336px;color:#1e1e1e;">Компьютер</div>
</body></html>
